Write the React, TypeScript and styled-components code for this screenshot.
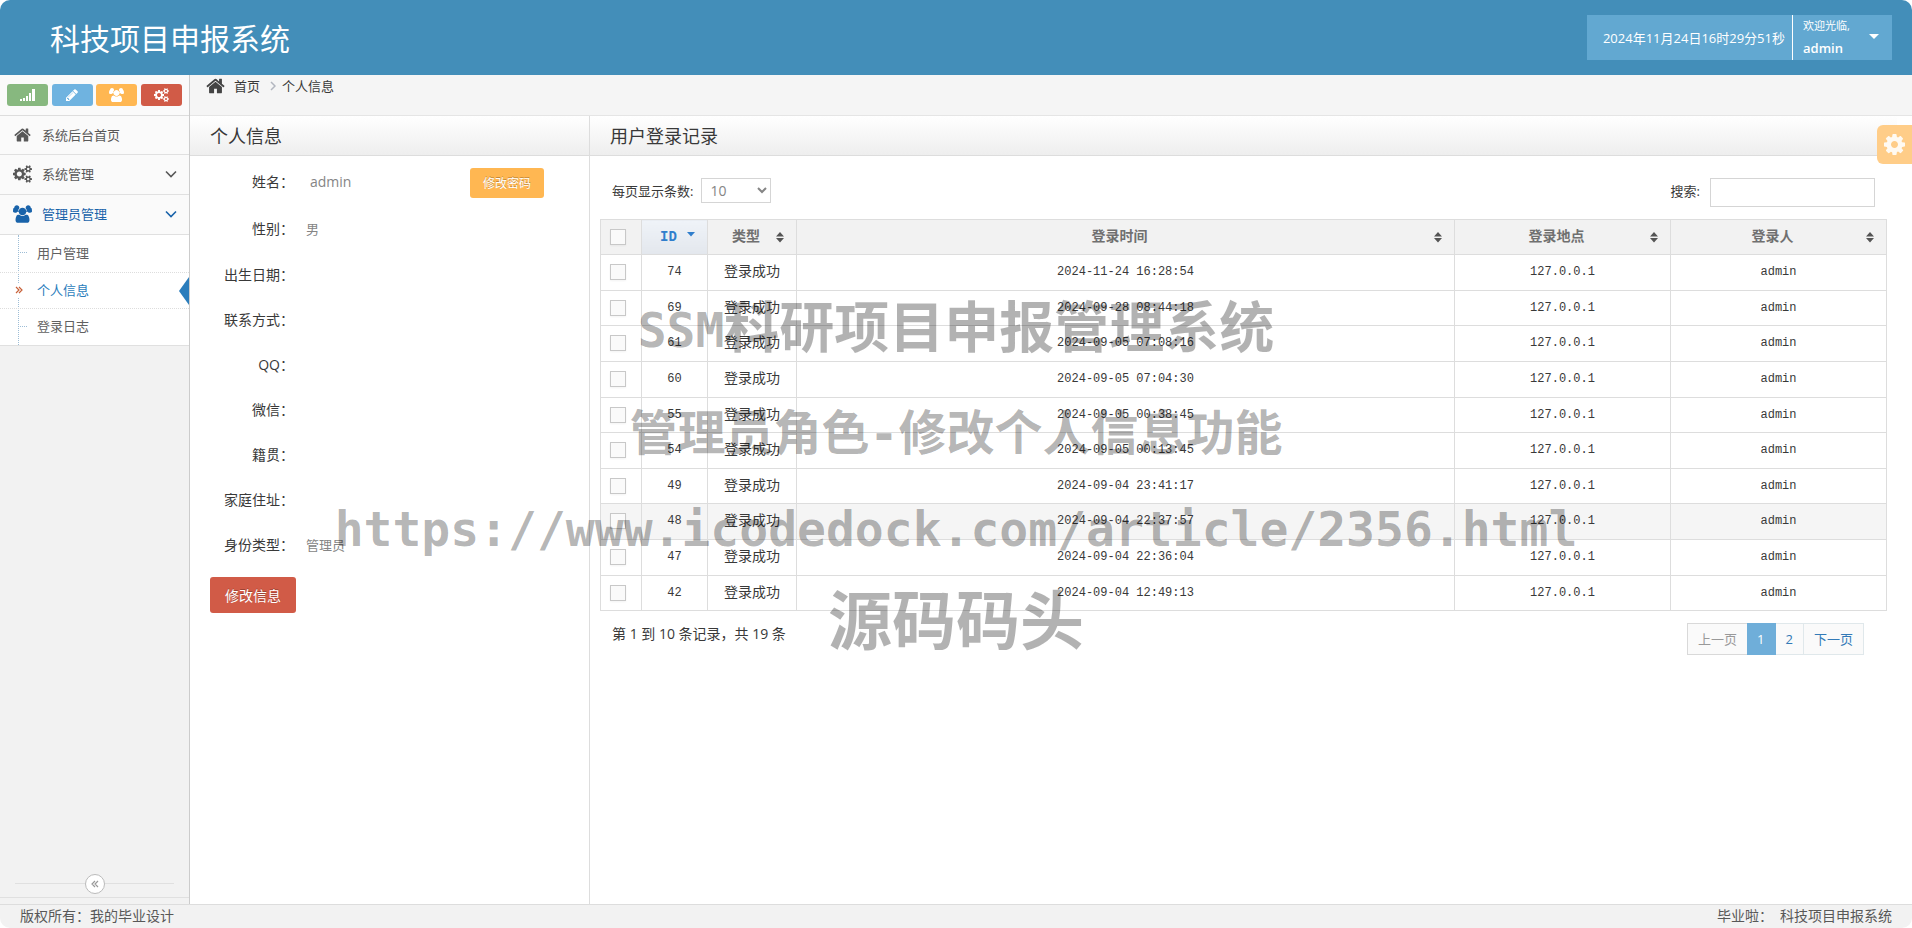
import React from 'react';
import styled, { createGlobalStyle, css } from 'styled-components';

const SANS = '"Open Sans", "Noto Sans CJK SC", sans-serif';
const MONO = '"Liberation Mono", "Noto Sans CJK SC", monospace';

const Global = createGlobalStyle`
  *, *::before, *::after { box-sizing: border-box; }
  body { margin: 0; background: #fff; color: #393939; font: 13px/20px ${SANS}; }
  button, input, select { font-family: inherit; }
  a { color: inherit; text-decoration: none; }
`;

/* ---------- icons ---------- */

const PATHS = {
  home: 'M1408 992v480q0 26-19 45t-45 19H960v-384H704v384H320q-26 0-45-19t-19-45V992q0-1 .5-3t.5-3l575-474 575 474q1 2 1 6zm223-69l-62 74q-8 9-21 11h-3q-13 0-21-7L832 424l-692 577q-12 8-24 7-13-2-21-11l-62-74q-8-10-7-23.500t11-21.500L756 279q32-26 76-26t76 26l244 204V288q0-14 9-23t23-9h192q14 0 23 9t9 23v408l219 182q10 8 11 21.500t-7 23.500z',
  pencil: 'M363 1536l91-91-235-235-91 91v107h128v128h107zm523-928q0-22-22-22-10 0-17 7l-542 542q-7 7-7 17 0 22 22 22 10 0 17-7l542-542q7-7 7-17zm-54-192l416 416-832 832H0v-416zm683 96q0 53-37 90l-166 166-416-416 166-165q36-38 90-38 53 0 91 38l235 234q37 39 37 91z',
  users: 'M593 640q-162 5-265 128H194q-82 0-138-40.500T0 609q0-353 124-353 6 0 43.500 21t97.500 42.500T384 341q67 0 133-23-5 37-5 66 0 139 81 256zM1664 1533q0 120-73 189.500t-194 69.500H523q-121 0-194-69.500T256 1533q0-53 3.500-103.500t14-109T300 1212t43-97.500 62-81 85.500-53.500T602 960q10 0 43 21.500t73 48 107 48 135 21.500 135-21.500 107-48 73-48 43-21.500q61 0 111.500 20t85.500 53.500 62 81 43 97.500 26.500 108.500 14 109 3.500 103.500zM640 256q0 106-75 181t-181 75-181-75-75-181 75-181T384 0t181 75 75 181zM1344 640q0 159-112.500 271.500T960 1024 688.500 911.500 576 640t112.500-271.500T960 256t271.500 112.500T1344 640zM1920 609q0 78-56 118.500T1726 768h-134q-103-123-265-128 81-117 81-256 0-29-5-66 66 23 133 23 59 0 119-21.500t97.500-42.500 43.500-21q124 0 124 353zM1792 256q0 106-75 181t-181 75-181-75-75-181 75-181T1536 0t181 75 75 181z',
  cog: 'M1024 896q0-106-75-181t-181-75-181 75-75 181 75 181 181 75 181-75 75-181zm512-109v222q0 12-8 23t-20 13l-185 28q-19 54-39 91 35 50 107 138 10 12 10 25t-9 23q-27 37-99 108t-94 71q-12 0-26-9l-138-108q-44 23-91 38-16 136-29 186-7 28-36 28H657q-14 0-24.500-8.500T621 1642l-28-184q-49-16-90-37l-141 107q-10 9-25 9-14 0-25-11-126-114-165-168-7-10-7-23 0-12 8-23 15-21 51-66.500t54-70.500q-27-50-41-99L29 1048q-13-2-21-12.500T0 1012V790q0-12 8-23t19-13l186-28q14-46 39-92-40-57-107-138-10-12-10-24 0-10 9-23 26-36 98.500-107.500T337 270q13 0 26 10l138 107q44-23 91-38 16-136 29-186 7-28 36-28h222q14 0 24.500 8.500T915 165l28 184q49 16 90 37l142-107q9-9 24-9 13 0 25 10 129 119 165 170 7 8 7 22 0 12-8 23-15 21-51 66.500t-54 70.500q26 50 41 98l183 28q13 2 21 12.500t8 23.500z',
  cogs: 'M896 896q0-106-75-181t-181-75-181 75-75 181 75 181 181 75 181-75 75-181zm768 512q0-52-38-90t-90-38-90 38-38 90q0 53 37.500 90.500t90.500 37.500 90.500-37.500 37.500-90.500zm0-1024q0-52-38-90t-90-38-90 38-38 90q0 53 37.500 90.500T1536 512t90.500-37.500T1664 384zm-384 421v185q0 10-7 19.500t-16 10.500l-155 24q-11 35-32 76 34 48 90 115 7 11 7 20 0 12-7 19-23 30-82.500 89.500T999 1423q-11 0-21-7l-115-90q-37 19-77 31-11 108-23 155-7 24-30 24H547q-11 0-20-7.500t-10-17.500l-23-153q-34-10-75-31l-118 89q-7 7-20 7-11 0-21-8-144-133-144-160 0-9 7-19 10-14 41-53t47-61q-23-44-35-82l-152-24q-10-1-17-9.500T0 987V802q0-10 7-19.500T23 772l155-24q11-35 32-76-34-48-90-115-7-11-7-20 0-12 7-20 22-30 82-89t79-59q11 0 21 7l115 90q34-18 77-32 11-108 23-154 7-24 30-24h186q11 0 20 7.500t10 17.500l23 153q34 10 75 31l118-89q8-7 20-7 11 0 21 8 144 133 144 160 0 8-7 19-12 16-42 54t-45 60q23 48 34 82l152 23q10 2 17 10.500t7 19.500zm640 533v140q0 16-149 31-12 27-30 52 51 113 51 138 0 4-4 7-122 71-124 71-8 0-46-47t-52-68q-20 2-30 2t-30-2q-14 21-52 68t-46 47q-2 0-124-71-4-3-4-7 0-25 51-138-18-25-30-52-149-15-149-31v-140q0-16 149-31 13-29 30-52-51-113-51-138 0-4 4-7 4-2 35-20t59-34 30-16q8 0 46 46.500t52 67.500q20-2 30-2t30 2q51-71 92-112l6-2q4 0 124 70 4 3 4 7 0 25-51 138 17 23 30 52 149 15 149 31zm0-1024v140q0 16-149 31-12 27-30 52 51 113 51 138 0 4-4 7-122 71-124 71-8 0-46-47t-52-68q-20 2-30 2t-30-2q-14 21-52 68t-46 47q-2 0-124-71-4-3-4-7 0-25 51-138-18-25-30-52-149-15-149-31V314q0-16 149-31 13-29 30-52-51-113-51-138 0-4 4-7 4-2 35-20t59-34 30-16q8 0 46 46.500t52 67.500q20-2 30-2t30 2q51-71 92-112l6-2q4 0 124 70 4 3 4 7 0 25-51 138 17 23 30 52 149 15 149 31z',
};
const WIDTHS = { home: 1664, pencil: 1536, users: 1920, cog: 1536, cogs: 1920 };
type IconName = keyof typeof PATHS;

const Icon = ({ name, size }: { name: IconName; size: number }) => (
  <svg width={Math.round((size * WIDTHS[name]) / 1792)} height={size} viewBox={`0 0 ${WIDTHS[name]} 1792`} fill="currentColor" aria-hidden>
    <path d={PATHS[name]} />
  </svg>
);
const Signal = () => (
  <svg width="16" height="14" viewBox="0 0 16 14" fill="currentColor" aria-hidden>
    <path d="M0 11h2v2H0zM3 10h2v3H3zM6 8h2v5H6zM9 5h2v8H9zM12 1h3v12h-3z" />
  </svg>
);
const Angle = () => (
  <svg width="12" height="8" viewBox="0 0 12 8" fill="none" stroke="currentColor" strokeWidth="1.6" aria-hidden>
    <path d="M1 1.500l5 5 5-5" />
  </svg>
);
const Crumb = () => (
  <svg width="6" height="10" viewBox="0 0 6 10" fill="none" stroke="#b2b6bf" strokeWidth="1.500" aria-hidden>
    <path d="M1 1l4 4-4 4" />
  </svg>
);
const DoubleAngle = () => (
  <svg width="8" height="8" viewBox="0 0 8 8" fill="none" stroke="currentColor" strokeWidth="1.200" aria-hidden>
    <path d="M1 1l3 3-3 3M4 1l3 3-3 3" />
  </svg>
);
const SortBoth = () => (
  <svg width="8" height="12" viewBox="0 0 8 12" fill="#555" aria-hidden>
    <path d="M4 1l4 4.500H0zM0 7h8L4 11.500z" />
  </svg>
);
const SortDesc = () => (
  <svg width="8" height="12" viewBox="0 0 8 12" fill="#307ecc" aria-hidden>
    <path d="M0 1h8L4 5.500z" />
  </svg>
);

/* ---------- page frame ---------- */

const Page = styled.div`
  position: relative;
  min-height: 100vh;
  display: flex;
  flex-direction: column;
  border-radius: 10px;
  overflow: hidden;
`;
const Navbar = styled.header`
  height: 75px;
  padding: 0 20px 0 50px;
  display: flex;
  align-items: center;
  justify-content: space-between;
  background: #438eb9;
  color: #fff;
`;
const Brand = styled.h1`
  margin: 0;
  padding-top: 2px;
  font-size: 30px;
  line-height: 40px;
  font-weight: 400;
`;
const NavBox = styled.div`
  height: 45px;
  display: flex;
  background: #62a8d1;
`;
const Clock = styled.time`
  padding: 0 7px 0 16px;
  line-height: 46px;
  font-size: 13px;
  border-right: 1px solid #fff;
`;
const UserButton = styled.button`
  width: 99px;
  padding: 0 13px 2px 10px;
  display: flex;
  align-items: center;
  justify-content: space-between;
  border: 0;
  background: none;
  color: #fff;
  font-size: 13px;
  line-height: 22px;
  text-align: left;
`;
const Welcome = styled.small`
  display: block;
  font-size: 11px;
`;
const UserName = styled.span`
  font-weight: 600;
`;
const Caret = styled.i`
  border: 5px solid transparent;
  border-top-color: #fff;
  border-bottom: 0;
`;
const Body = styled.div`
  flex: 1;
  display: flex;
`;

/* ---------- sidebar ---------- */

const Sidebar = styled.aside`
  flex: none;
  width: 190px;
  display: flex;
  flex-direction: column;
  background: #f2f2f2;
  border-right: 1px solid #ccc;
`;
const Shortcuts = styled.div`
  height: 41px;
  padding: 0 7px;
  display: flex;
  align-items: center;
  justify-content: space-between;
  background: #fafafa;
  border-bottom: 1px solid #ddd;
`;
const Shortcut = styled.button<{ $bg: string }>`
  width: 41px;
  height: 22px;
  padding: 0;
  display: grid;
  place-items: center;
  border: 0;
  border-radius: 3px;
  background: ${p => p.$bg};
  color: #fff;
`;
const MenuItem = styled.a<{ $open?: boolean }>`
  height: 40px;
  padding: 0 12px 1px 10px;
  display: flex;
  align-items: center;
  gap: 8px;
  background: #fafafa;
  border-bottom: 1px solid #e0e0e0;
  color: ${p => (p.$open ? '#1963aa' : '#585858')};
  &:first-of-type { height: 39px; }
`;
const MenuIcon = styled.span`
  width: 24px;
  display: grid;
  place-items: center;
`;
const MenuText = styled.span`
  flex: 1;
`;
const SubMenu = styled.nav`
  position: relative;
  background: #fff;
  border-bottom: 1px solid #e0e0e0;
  &::before {
    content: '';
    position: absolute;
    inset: 0 auto 0 18px;
    border-left: 1px dotted #9dbdd6;
  }
`;
const SubItem = styled.a<{ $active?: boolean }>`
  position: relative;
  height: ${p => (p.$active ? 36 : 37)}px;
  padding: 0 0 2px 37px;
  display: flex;
  align-items: center;
  color: ${p => (p.$active ? '#2b7dbc' : '#616161')};
  & + & { border-top: 1px dotted #ddd; }
  ${p => p.$active
    ? css`
        &::after {
          content: '';
          position: absolute;
          right: 0;
          top: 4px;
          border: 14px solid transparent;
          border-left: 0;
          border-right: 10px solid #2b7dbc;
        }
      `
    : css`
        &::before {
          content: '';
          position: absolute;
          left: 20px;
          top: 17px;
          width: 7px;
          border-top: 1px dotted #9dbdd6;
        }
      `}
`;
const ActiveMark = styled.span`
  position: absolute;
  left: 15px;
  top: 10px;
  height: 14px;
  display: grid;
  place-items: center;
  background: #fff;
  color: #c86139;
`;
const Collapse = styled.div`
  margin-top: auto;
  height: 28px;
  margin-bottom: 6px;
  padding: 0 15px;
  display: flex;
  align-items: center;
  border-bottom: 1px solid #e0e0e0;
  &::before, &::after { content: ''; flex: 1; border-top: 1px solid #e0e0e0; }
`;
const CollapseButton = styled.button`
  width: 20px;
  height: 20px;
  padding: 0;
  display: grid;
  place-items: center;
  border: 1px solid #bbb;
  border-radius: 50%;
  background: #fff;
  color: #999;
  svg { transform: rotate(180deg); }
`;

/* ---------- main area ---------- */

const Main = styled.main`
  position: relative;
  flex: 1;
  min-width: 0;
  display: flex;
  flex-direction: column;
`;
const Breadcrumb = styled.nav`
  height: 41px;
  padding: 1px 16px;
  display: flex;
  align-items: flex-start;
  background: #f5f5f5;
  border-bottom: 1px solid #e5e5e5;
  & > * { height: 20px; display: flex; align-items: center; }
`;
const CrumbLink = styled.a`
  margin: 0 10px 0 9px;
`;
const CrumbIcon = styled.span`
  color: #444;
`;
const CrumbSep = styled.span`
  margin-right: 6px;
`;
const Columns = styled.div`
  flex: 1;
  display: flex;
`;
const ProfilePanel = styled.section`
  flex: none;
  width: 400px;
  border-right: 1px solid #ddd;
`;
const RecordPanel = styled.section`
  flex: 1;
  min-width: 0;
  margin-right: 15px;
`;
const PanelTitle = styled.h2`
  margin: 0;
  height: 40px;
  padding: 0 20px;
  font-size: 18px;
  line-height: 41px;
  font-weight: 400;
  color: #393939;
  background: linear-gradient(#fff, #eee);
  border-bottom: 1px solid #ddd;
`;
const Details = styled.dl`
  margin: 0;
  padding-top: 2px;
`;
const Field = styled.div<{ $tall?: boolean }>`
  height: ${p => (p.$tall ? 47 : 45)}px;
  padding-right: 45px;
  display: flex;
  align-items: center;
`;
const FieldName = styled.dt`
  width: 104px;
  text-align: right;
  font-size: 14px;
`;
const FieldValue = styled.dd<{ $large?: boolean }>`
  flex: 1;
  margin: 0;
  padding-left: ${p => (p.$large ? 16 : 12)}px;
  font-size: ${p => (p.$large ? 14 : 13)}px;
  color: #858585;
`;
const ActionButton = styled.button<{ $danger?: boolean }>`
  height: ${p => (p.$danger ? 36 : 30)}px;
  padding: 0 ${p => (p.$danger ? 15 : 13)}px;
  margin: ${p => (p.$danger ? '10px 20px' : '2px 0 0')};
  border: 0;
  border-radius: 3px;
  background: ${p => (p.$danger ? '#d15b47' : '#ffb752')};
  color: #fff;
  font-size: ${p => (p.$danger ? 14 : 12)}px;
  text-shadow: 0 -1px 0 rgba(0, 0, 0, 0.25);
`;

/* ---------- record table ---------- */

const TableTools = styled.div`
  height: 63px;
  padding: 22px 22px 0 22px;
  display: flex;
  align-items: flex-start;
  justify-content: space-between;
`;
const ToolLabel = styled.label<{ $gap: number }>`
  display: flex;
  gap: ${p => p.$gap}px;
  line-height: 26px;
`;
const PageSize = styled.select`
  width: 70px;
  height: 25px;
  padding: 0 0 0 4px;
  border: 1px solid #d5d5d5;
  background: #fff;
  color: #858585;
  font-size: 14px;
`;
const SearchInput = styled.input`
  width: 165px;
  height: 29px;
  padding: 4px 6px;
  border: 1px solid #d5d5d5;
`;
const Table = styled.table`
  width: calc(100% - 20px);
  margin-left: 10px;
  table-layout: fixed;
  border-collapse: collapse;
  font-family: ${MONO};
  th, td { height: 36px; padding: 0 0 1px; border: 1px solid #ddd; }
  th, tbody tr:nth-child(5n + 2) td, tbody tr:nth-child(5n) td { height: 35px; }
`;
const HeadCell = styled.th<{ $sorted?: boolean; $width?: string }>`
  width: ${p => p.$width ?? 'auto'};
  background: ${p => (p.$sorted ? 'linear-gradient(#eff3f8, #e3e7ed)' : '#f2f2f2')};
  color: ${p => (p.$sorted ? '#307ecc' : '#707070')};
  font-size: 14px;
`;
const HeadInner = styled.div`
  padding: 0 12px 0 8px;
  display: flex;
  align-items: center;
  span { flex: 1; text-align: center; }
`;
const Row = styled.tr<{ $hover?: boolean }>`
  background: ${p => (p.$hover ? '#f5f5f5' : '#fff')};
`;
const Cell = styled.td`
  text-align: center;
  font-size: 12px;
`;
const TypeCell = styled(Cell)`
  font-size: 14px;
`;
const Check = styled.input`
  appearance: none;
  display: block;
  width: 16px;
  height: 16px;
  margin: 0 auto 0 9px;
  border: 1px solid #c8c8c8;
  background: #fafafa;
  box-shadow: 0 1px 2px rgba(0, 0, 0, 0.05);
`;
const TableFoot = styled.div`
  padding: 12px 33px 0 22px;
  display: flex;
  align-items: flex-start;
  justify-content: space-between;
`;
const Info = styled.div`
  padding-top: 1px;
  font-size: 14px;
`;
const Pager = styled.nav`
  display: flex;
`;
const PageLink = styled.a<{ $state?: 'active' | 'disabled' }>`
  height: 32px;
  padding: 0 10px;
  line-height: 31px;
  border: 1px solid #e0e8eb;
  border-left-width: 0;
  background: #fafafa;
  color: #337ab7;
  ${p => p.$state === 'active' && css`
    background: #6faed9;
    border-color: #6faed9;
    color: #fff;
  `}
  ${p => p.$state === 'disabled' && css`
    border-color: #d9d9d9;
    border-left-width: 1px;
    border-right-width: 0;
    color: #999;
  `}
`;

const SettingsButton = styled.button`
  position: absolute;
  right: 0;
  top: 50px;
  width: 35px;
  height: 39px;
  padding: 0;
  display: grid;
  place-items: center;
  border: 0;
  border-radius: 6px 0 0 6px;
  background: #ffcd88;
  color: #fffaf2;
`;
const Footer = styled.footer`
  height: 24px;
  padding: 0 20px;
  display: flex;
  justify-content: space-between;
  line-height: 22px;
  font-size: 14px;
  background: #f2f2f2;
  border-top: 1px solid #ddd;
  color: #585858;
`;
const FooterOwner = styled.span`
  display: flex;
  gap: 7px;
`;

const Watermark = styled.div`
  position: absolute;
  inset: 276px 0 auto;
  text-align: center;
  pointer-events: none;
  font-family: "DejaVu Sans Mono", "Noto Sans CJK SC", monospace;
  font-weight: 700;
  color: rgba(0, 0, 0, 0.3);
`;
const MarkLine = styled.div<{ $size: number; $height: number }>`
  font-size: ${p => p.$size}px;
  line-height: ${p => p.$height}px;
  white-space: nowrap;
`;
const MarkLatin = styled.span`
  font-size: 48px;
`;

/* ---------- data ---------- */

const SHORTCUTS: [string, string, React.ReactNode][] = [
  ['统计', '#87b87f', <Signal />],
  ['编辑', '#6fb3e0', <Icon name="pencil" size={14} />],
  ['用户', '#ffb752', <Icon name="users" size={14} />],
  ['设置', '#d15b47', <Icon name="cogs" size={14} />],
];

const FIELDS = ['出生日期', '联系方式', 'QQ', '微信', '籍贯', '家庭住址'];

const RECORDS: [number, string][] = [
  [74, '2024-11-24 16:28:54'],
  [69, '2024-09-28 08:44:18'],
  [61, '2024-09-05 07:08:16'],
  [60, '2024-09-05 07:04:30'],
  [55, '2024-09-05 00:38:45'],
  [54, '2024-09-05 00:13:45'],
  [49, '2024-09-04 23:41:17'],
  [48, '2024-09-04 22:37:57'],
  [47, '2024-09-04 22:36:04'],
  [42, '2024-09-04 12:49:13'],
];

const SortHead = ({ label, width, sorted }: { label: string; width?: string; sorted?: boolean }) => (
  <HeadCell $width={width} $sorted={sorted}>
    <HeadInner>
      <span>{label}</span>
      {sorted ? <SortDesc /> : <SortBoth />}
    </HeadInner>
  </HeadCell>
);

export default function App() {
  return (
    <Page>
      <Global />
      <Navbar>
        <Brand>科技项目申报系统</Brand>
        <NavBox>
          <Clock>2024年11月24日16时29分51秒</Clock>
          <UserButton>
            <span>
              <Welcome>欢迎光临,</Welcome>
              <UserName>admin</UserName>
            </span>
            <Caret />
          </UserButton>
        </NavBox>
      </Navbar>

      <Body>
        <Sidebar>
          <Shortcuts>
            {SHORTCUTS.map(([label, bg, icon]) => (
              <Shortcut key={label} $bg={bg} aria-label={label}>{icon}</Shortcut>
            ))}
          </Shortcuts>
          <MenuItem href="#home">
            <MenuIcon><Icon name="home" size={18} /></MenuIcon>
            <MenuText>系统后台首页</MenuText>
          </MenuItem>
          <MenuItem href="#system">
            <MenuIcon><Icon name="cogs" size={18} /></MenuIcon>
            <MenuText>系统管理</MenuText>
            <Angle />
          </MenuItem>
          <MenuItem href="#admin" $open>
            <MenuIcon><Icon name="users" size={18} /></MenuIcon>
            <MenuText>管理员管理</MenuText>
            <Angle />
          </MenuItem>
          <SubMenu>
            <SubItem href="#users">用户管理</SubItem>
            <SubItem href="#profile" $active>
              <ActiveMark><DoubleAngle /></ActiveMark>
              个人信息
            </SubItem>
            <SubItem href="#logs">登录日志</SubItem>
          </SubMenu>
          <Collapse>
            <CollapseButton aria-label="收起菜单"><DoubleAngle /></CollapseButton>
          </Collapse>
        </Sidebar>

        <Main>
          <Breadcrumb>
            <CrumbIcon><Icon name="home" size={20} /></CrumbIcon>
            <CrumbLink href="#home">首页</CrumbLink>
            <CrumbSep><Crumb /></CrumbSep>
            <span>个人信息</span>
          </Breadcrumb>

          <Columns>
            <ProfilePanel>
              <PanelTitle>个人信息</PanelTitle>
              <Details>
                <Field $tall>
                  <FieldName>姓名：</FieldName>
                  <FieldValue $large>admin</FieldValue>
                  <ActionButton>修改密码</ActionButton>
                </Field>
                <Field $tall>
                  <FieldName>性别：</FieldName>
                  <FieldValue>男</FieldValue>
                </Field>
                {FIELDS.map(name => (
                  <Field key={name}>
                    <FieldName>{name}：</FieldName>
                    <FieldValue />
                  </Field>
                ))}
                <Field>
                  <FieldName>身份类型：</FieldName>
                  <FieldValue>管理员</FieldValue>
                </Field>
              </Details>
              <ActionButton $danger>修改信息</ActionButton>
            </ProfilePanel>

            <RecordPanel>
              <PanelTitle>用户登录记录</PanelTitle>
              <TableTools>
                <ToolLabel $gap={8}>
                  每页显示条数:
                  <PageSize defaultValue="10">
                    <option>10</option>
                    <option>25</option>
                    <option>50</option>
                  </PageSize>
                </ToolLabel>
                <ToolLabel $gap={10}>
                  搜索:
                  <SearchInput type="text" />
                </ToolLabel>
              </TableTools>
              <Table>
                <thead>
                  <tr>
                    <HeadCell $width="41px"><Check type="checkbox" aria-label="全选" /></HeadCell>
                    <SortHead label="ID" width="66px" sorted />
                    <SortHead label="类型" width="89px" />
                    <SortHead label="登录时间" />
                    <SortHead label="登录地点" width="216px" />
                    <SortHead label="登录人" width="216px" />
                  </tr>
                </thead>
                <tbody>
                  {RECORDS.map(([id, time]) => (
                    <Row key={id} $hover={id === 48}>
                      <Cell><Check type="checkbox" aria-label={`选择 ${id}`} /></Cell>
                      <Cell>{id}</Cell>
                      <TypeCell>登录成功</TypeCell>
                      <Cell>{time}</Cell>
                      <Cell>127.0.0.1</Cell>
                      <Cell>admin</Cell>
                    </Row>
                  ))}
                </tbody>
              </Table>
              <TableFoot>
                <Info>第 1 到 10 条记录，共 19 条</Info>
                <Pager>
                  <PageLink href="#prev" $state="disabled">上一页</PageLink>
                  <PageLink href="#1" $state="active">1</PageLink>
                  <PageLink href="#2">2</PageLink>
                  <PageLink href="#next">下一页</PageLink>
                </Pager>
              </TableFoot>
            </RecordPanel>
          </Columns>
          <SettingsButton aria-label="设置"><Icon name="cog" size={25} /></SettingsButton>
        </Main>
      </Body>

      <Footer>
        <span>版权所有：我的毕业设计</span>
        <FooterOwner>
          <span>毕业啦：</span>
          <span>科技项目申报系统</span>
        </FooterOwner>
      </Footer>

      <Watermark>
        <MarkLine $size={55} $height={104}><MarkLatin>SSM</MarkLatin>科研项目申报管理系统</MarkLine>
        <MarkLine $size={48} $height={102}>管理员角色-修改个人信息功能</MarkLine>
        <MarkLine $size={48} $height={90}>https://www.icodedock.com/article/2356.html</MarkLine>
        <MarkLine $size={64} $height={96}>源码码头</MarkLine>
      </Watermark>
    </Page>
  );
}
